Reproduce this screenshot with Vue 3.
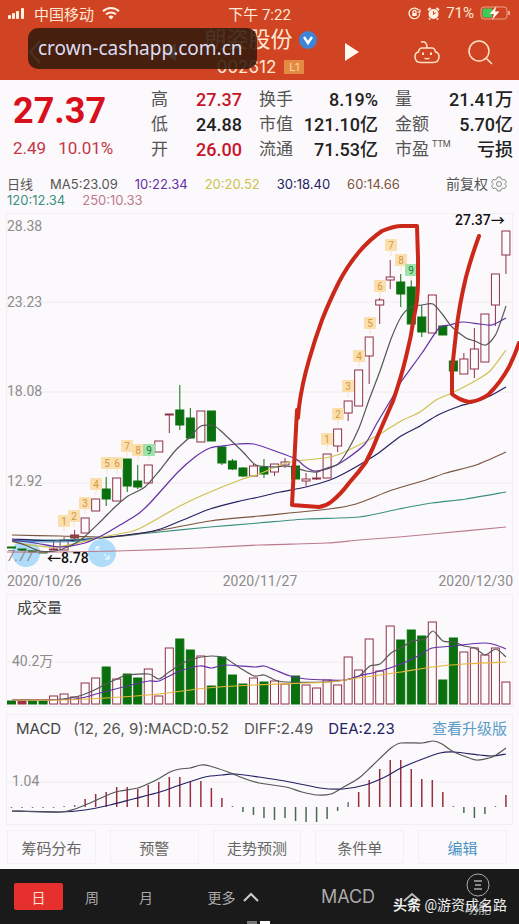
<script setup>
import { ref } from 'vue';

const period = ref('日');
const periods = ['日', '周', '月'];

const quotes = [
  { label: '高', value: '27.37', up: true },
  { label: '换手', value: '8.19%' },
  { label: '量', value: '21.41万' },
  { label: '低', value: '24.88' },
  { label: '市值', value: '121.10亿' },
  { label: '金额', value: '5.70亿' },
  { label: '开', value: '26.00', up: true },
  { label: '流通', value: '71.53亿' },
  { label: '市盈', sup: 'TTM', value: '亏损' },
];

const averages = [
  { text: 'MA5:23.09', tone: 'gray' },
  { text: '10:22.34', tone: 'purple' },
  { text: '20:20.52', tone: 'yellow' },
  { text: '30:18.40', tone: 'navy' },
  { text: '60:14.66', tone: 'brown' },
];
const longAverages = [
  { text: '120:12.34', tone: 'teal' },
  { text: '250:10.33', tone: 'pink' },
];

const barX = (i) => 11.5 + i * 10.52;

// kind, body top, body bottom, high, low
const candles = [
  ['g', 547, 548, 547, 548], ['g', 549, 550, 549, 550], ['g', 551, 552, 551, 552], ['g', 552, 553, 552, 553],
  ['h', 549, 550, 541, 550], ['h', 540, 550, 537, 550], ['r', 535, 538, 530, 540], ['h', 518, 533, 518, 533],
  ['h', 499, 511, 499, 511], ['g', 489, 499, 477, 506], ['h', 478, 501, 478, 501], ['g', 459, 486, 459, 492],
  ['g', 481, 487, 465, 489], ['h', 465, 483, 465, 483], ['h', 441, 452, 441, 452], ['h', 414, 415, 414, 433],
  ['g', 410, 425, 385, 430], ['g', 418, 438, 408, 439], ['h', 411, 442, 411, 442], ['g', 411, 441, 411, 441],
  ['g', 447, 463, 446, 465], ['g', 461, 469, 459, 470], ['g', 468, 476, 467, 477], ['h', 466, 476, 464, 476],
  ['g', 467, 474, 459, 478], ['h', 464, 472, 464, 476], ['h', 462, 465, 458, 468], ['g', 466, 479, 466, 479],
  ['h', 479, 481, 473, 486], ['h', 478, 479, 472, 480], ['h', 454, 478, 454, 478], ['h', 429, 446, 429, 452],
  ['h', 401, 413, 401, 421], ['h', 370, 406, 370, 406], ['h', 337, 356, 337, 384], ['h', 300, 305, 298, 324],
  ['h', 277, 280, 260, 289], ['g', 282, 294, 274, 307], ['g', 287, 324, 280, 335], ['g', 317, 332, 305, 337],
  ['h', 295, 333, 295, 333], ['g', 326, 335, 326, 335], ['g', 361, 371, 361, 371], ['h', 359, 374, 353, 374],
  ['h', 349, 369, 328, 378], ['h', 314, 362, 314, 362], ['h', 274, 305, 274, 326], ['h', 231, 255, 231, 274],
];

// x, y, number of the nine-turn marker
const marks = [
  [64, 521, 1], [74, 516, 2], [85, 503, 3], [96, 484, 4], [107, 463, 5], [117, 463, 6], [127, 446, 7], [138, 450, 8], [149, 450, 9],
  [327, 439, 1], [338, 414, 2], [348, 386, 3], [359, 356, 4], [370, 323, 5], [380, 286, 6], [391, 245, 7], [401, 260, 8], [411, 270, 9],
];

function curve(text) {
  const p = text.split(' ').map((s) => s.split(',').map(Number));
  let d = `M${p[0]}`;
  for (let i = 0; i < p.length - 1; i++) {
    const a = p[i - 1] || p[i];
    const b = p[i];
    const c = p[i + 1];
    const e = p[i + 2] || c;
    d += `C${b[0] + (c[0] - a[0]) / 8},${b[1] + (c[1] - a[1]) / 8} ${c[0] - (e[0] - b[0]) / 8},${c[1] - (e[1] - b[1]) / 8} ${c}`;
  }
  return d;
}

const priceLines = [
  { tone: 'pink', d: curve('7,552 60,552 117,551 200,548 259,545 326,543 359,540 399,537 432,534 506,527') },
  { tone: 'teal', d: curve('12,540 60,540 100,538 150,533 210,527 259,523 306,519 359,517 399,509 432,503 466,499 506,492') },
  { tone: 'brown', d: curve('12,535 60,536 110,537 150,532 210,521 259,516 329,509 356,504 392,490 426,480 446,473 476,465 506,452') },
  { tone: 'navy', d: curve('12,539 60,541 100,538 153,531 178,522 210,509 240,501 259,497 280,492 306,487 330,480 345,473 366,461 380,452 401,436 420,426 438,415 460,406 475,402 490,396 506,387') },
  { tone: 'blue', d: curve('12,541 45,542 80,541 103,537') },
  { tone: 'yellow', d: curve('12,542 55,547 103,537 133,531 150,523 178,507 203,495 240,480 256,475 264,472 280,465 296,461 325,458 340,454 359,445 380,434 401,421 420,412 436,400 452,393 475,381 490,371 506,350') },
  { tone: 'purple', d: curve('12,540 35,543 60,547 85,543 103,535 120,525 138,514 150,503 178,472 195,457 210,448 222,446 238,444 254,444 275,451 296,459 303,465 314,471 330,468 345,460 365,444 377,423 392,398 401,382 422,353 439,328 450,325 462,322 480,324 492,325 506,318') },
  { tone: 'gray', d: curve('12,541 25,545 40,551 55,551 70,546 83,538 100,522 115,507 128,496 145,487 160,470 175,451 190,437 201,426 214,426 222,432 243,452 256,465 275,467 285,466 296,468 306,471 317,472 327,468 338,464 348,450 359,428 369,400 380,371 391,339 401,317 411,307 422,305 433,304 443,315 452,327 466,338 475,341 486,345 496,334 506,306') },
];

const volumes = [
  ['g', 700], ['r', 700], ['g', 700], ['g', 700], ['h', 695], ['h', 693], ['h', 696], ['h', 682], ['h', 677], ['g', 666], ['h', 678], ['g', 673],
  ['g', 677], ['h', 668], ['h', 695], ['h', 647], ['g', 638], ['g', 649], ['h', 655], ['g', 685], ['g', 656], ['g', 674], ['g', 683], ['h', 677],
  ['g', 681], ['h', 680], ['h', 683], ['g', 675], ['h', 684], ['h', 687], ['h', 679], ['h', 684], ['h', 656], ['h', 669], ['h', 638], ['h', 670],
  ['h', 625], ['g', 639], ['g', 629], ['g', 635], ['h', 621], ['g', 679], ['g', 637], ['h', 651], ['h', 647], ['h', 654], ['h', 647], ['h', 681],
];
const volumeLines = [
  { tone: 'gray', d: curve('12,699 50,699 75,696 90,691 106,683 117,678 127,674 149,673 159,678 169,671 185,661 197,657 212,655 225,657 240,667 254,675 264,674 275,679 285,681 327,681 345,679 359,675 370,665 380,663 391,652 401,647 412,640 425,638 433,630 443,640 454,641 464,645 475,647 485,654 496,648 506,656') },
  { tone: 'purple', d: curve('12,699 75,698 96,693 127,685 149,680 159,680 180,670 200,665 212,667 225,664 254,666 264,665 275,669 290,675 306,678 327,679 345,679 359,675 380,670 401,663 420,654 432,647 454,645 470,643 485,642 496,644 506,648') },
  { tone: 'amber', d: curve('12,699 60,699 106,697 159,693 206,687 254,684 330,681 350,678 380,674 401,671 432,666 464,663 506,661') },
];

// bar ends, measured from the zero axis at 806
const macd = [
  807, 807, 807, 807, 807, 805, 804, 798, 793, 791, 786, 786, 788, 784, 781, 776, 776, 780, 780, 787, 797, 805, 811, 814,
  817, 819, 817, 820, 821, 821, 818, 810, 801, 791, 779, 768, 759, 759, 768, 778, 779, 791, 805, 812, 817, 813, 805, 794,
];
const macdLines = [
  { tone: 'navy', d: curve('12,810 60,811 85,809 110,804 133,798 160,791 180,784 205,776 222,774 235,773 259,776 285,780 320,787 343,788 365,784 385,776 401,767 420,759 440,752 454,751 480,754 492,755 506,753') },
  { tone: 'gray', d: curve('12,810 60,811 75,808 90,802 110,793 120,790 138,787 150,782 160,777 170,771 180,768 190,767 201,764 210,765 228,771 243,777 259,782 286,786 302,791 317,794 331,793 342,787 359,777 372,765 391,747 401,742 422,742 433,740 442,743 454,751 476,759 489,757 496,754 506,747') },
];
</script>

<template>
  <main>
    <header>
      <div class="status">
        <div class="carrier">
          <svg width="18" height="12" viewBox="0 0 18 12" fill="#fff0df">
            <rect x="0" y="8" width="3" height="4" rx="1" /><rect x="4" y="6" width="3" height="6" rx="1" />
            <rect x="8" y="4" width="3" height="8" rx="1" /><rect x="13" y="1" width="3" height="11" rx="1" />
          </svg>
          <span>中国移动</span>
          <svg width="18" height="14" viewBox="0 0 18 14" fill="none" stroke="#fff0df" stroke-width="2">
            <path d="M1 5.2a11.5 11.5 0 0 1 16 0M4 8.4a7.2 7.2 0 0 1 10 0" />
            <path d="M6.3 10.8a4 4 0 0 1 5.4 0L9 13.6z" fill="#fff0df" stroke="none" />
          </svg>
        </div>
        <time>下午 7:22</time>
        <div class="device">
          <svg width="13" height="13" viewBox="0 0 13 13" fill="none" stroke="#fff0df" stroke-width="1.3">
            <path d="M10.5 3a5.3 5.3 0 1 0 1.2 3.5M11.9 2.6v2.6H9.5M5 6V4.8a1.5 1.5 0 0 1 3 0V6" />
            <rect x="4.3" y="6" width="4.4" height="3" fill="#fff0df" stroke="none" />
          </svg>
          <svg width="13" height="13" viewBox="0 0 13 13">
            <circle cx="6.5" cy="7" r="5" fill="#fff0df" />
            <path d="M1 3.2 3.6 1M12 3.2 9.4 1M3 11.5l-1 1M10 11.5l1 1" stroke="#fff0df" stroke-width="2" />
            <path d="M6.5 4v3.3L9 5.6" fill="none" stroke="#d04424" />
          </svg>
          <span>71%</span>
          <svg width="31" height="14" viewBox="0 0 31 14">
            <rect x="1" y="1" width="26" height="12" rx="3" fill="none" stroke="#eda386" />
            <path d="M2.5 4a1.5 1.5 0 0 1 1.5-1.5h8v9H4A1.5 1.5 0 0 1 2.5 10z" fill="#3fcb58" />
            <path d="M16.5 0 9.5 8h4.5L12 14l7.5-8.500H15z" fill="#fff8ee" />
            <path d="M29 5v4" stroke="#eda386" stroke-width="2" />
          </svg>
        </div>
      </div>
      <nav>
        <div class="nav-left">
          <button aria-label="返回">
            <svg width="14" height="24" viewBox="0 0 14 24" fill="none" stroke="#ffe2c4" stroke-width="2"><path d="M12 1 2 12l10 11" /></svg>
          </button>
          <button aria-label="上一只">
            <svg width="14" height="18" viewBox="0 0 14 18" fill="#d8f0ff"><path d="M14 0v18L0 9z" /></svg>
          </button>
        </div>
        <div class="stock">
          <h1>朗姿股份
            <svg width="18" height="18" viewBox="0 0 18 18"><circle cx="9" cy="9" r="9" fill="#3d85d8" /><path d="m5 6 4 6 4-6" fill="none" stroke="#fff" stroke-width="2.4" /></svg>
          </h1>
          <p>002612 <span class="level">L1</span></p>
        </div>
        <div class="nav-right">
          <button class="next" aria-label="下一只">
            <svg width="14" height="18" viewBox="0 0 14 18" fill="#fff8ee"><path d="M0 0v18l14-9z" /></svg>
          </button>
          <button aria-label="助手">
            <svg width="26" height="24" viewBox="0 0 26 24" fill="none" stroke="#ffe2c4" stroke-width="1.5">
              <path d="M7 2c4-1 6 1 6 6M8 8h10c2 0 3 1 3.5 4 3 .5 3.5 2 3.5 4.5 0 4-2.500 6-6 6H7c-3.500 0-6-2-6-6C1 14 1.500 12.500 4.500 12 5 9 6 8 8 8z" />
              <path d="M9 12.500v2.500M17 12.500v2.500" stroke-width="2" /><path d="M10.500 18c1.500 1 3.500 1 5 0" />
            </svg>
          </button>
          <button aria-label="搜索">
            <svg width="25" height="25" viewBox="0 0 25 25" fill="none" stroke="#ffe2c4" stroke-width="1.5"><circle cx="11" cy="11" r="10" /><path d="m18 18 6 6" /></svg>
          </button>
        </div>
      </nav>
      <div class="site">crown-cashapp.com.cn</div>
    </header>

    <section class="quote">
      <div class="price">
        <strong>27.37</strong>
        <p><span>2.49</span><span>10.01%</span></p>
      </div>
      <dl>
        <div v-for="q in quotes" :key="q.label">
          <dt>{{ q.label }}<sup v-if="q.sup">{{ q.sup }}</sup></dt>
          <dd :class="{ up: q.up }">{{ q.value }}</dd>
        </div>
      </dl>
    </section>

    <section class="averages">
      <div class="row">
        <span class="day">日线</span>
        <span v-for="a in averages" :key="a.text" :class="a.tone">{{ a.text }}</span>
        <button class="adjust">前复权
          <svg width="16" height="16" viewBox="0 0 16 16" fill="none" stroke="#888">
            <path d="M6.500 1h3l.7 2 1.600.9 2.100-.4 1.500 2.600L14 7.600v.8l1.400 1.500-1.500 2.600-2.100-.4-1.600.9-.7 2h-3l-.7-2-1.600-.9-2.100.4L.6 9.900 2 8.400v-.8L.6 6.100l1.500-2.600 2.100.4L5.800 3z" />
            <circle cx="8" cy="8" r="2.5" />
          </svg>
        </button>
      </div>
      <div class="row">
        <span v-for="a in longAverages" :key="a.text" :class="a.tone">{{ a.text }}</span>
      </div>
    </section>

    <section class="panel price-panel">
      <svg class="chart" viewBox="7 214 505 357">
        <path class="grid" d="M7 302h505M7 392h505M7 483h505" />
        <g class="axis">
          <text x="7" y="231">28.38</text>
          <text x="7" y="307">23.23</text>
          <text x="7" y="396">18.08</text>
          <text x="7" y="486">12.92</text>
        </g>
        <circle class="bubble" cx="26" cy="553" r="14" />
        <circle class="bubble" cx="102" cy="553" r="14" />
        <path class="expand" d="M96 551v-4h4M96 547l5 5M109 555v4h-4M109 559l-5-5" />
        <text class="axis slanted" x="7" y="561">7.77</text>
        <g v-for="(c, i) in candles" :key="i" :class="'bar-' + c[0]">
          <path :d="`M${barX(i)} ${c[3]}V${c[1]}M${barX(i)} ${c[2]}V${c[4]}`" />
          <rect :x="barX(i) - 4" :y="c[1]" width="8" :height="c[2] - c[1]" />
        </g>
        <path v-for="l in priceLines" :key="l.tone" class="line" :class="l.tone" :d="l.d" />
        <g v-for="m in marks" :key="m[0]" class="mark" :class="{ nine: m[2] === 9 }">
          <path :d="`M${m[0]} ${m[1] + 6}v5`" />
          <rect :x="m[0] - 6" :y="m[1] - 6" width="12" height="12" rx="1" />
          <text :x="m[0]" :y="m[1] + 4">{{ m[2] }}</text>
        </g>
        <path class="pen" d="M417 226H402C395 226 389 228 382 231Q369 240 359 252Q348 265 339 282Q329 302 322 320Q315 339 309 360Q302 384 299 407L298 418L297 410L294 467L292 505Q305 506 319 507Q326 506 331 502Q341 494 349 483Q359 472 366 462Q373 449 379 433L393 401Q401 378 406 357Q411 338 414 317Q418 299 418 283V258z" />
        <path class="pen" d="M479 236Q471 258 466 277Q459 306 456 333L452 370V394Q459 400 469 402Q480 401 489 394Q501 382 509 367Q515 355 519 343" />
        <text class="callout" x="455" y="225">27.37→</text>
        <text class="callout" x="47" y="563">←8.78</text>
      </svg>
    </section>
    <div class="dates"><span>2020/10/26</span><span>2020/11/27</span><span>2020/12/30</span></div>

    <section class="panel volume">
      <h2>成交量</h2>
      <svg class="chart" viewBox="7 618 505 87">
        <path class="grid" d="M7 661h505" />
        <text class="axis" x="12" y="665">40.2万</text>
        <g v-for="(v, i) in volumes" :key="i" :class="'bar-' + v[0]">
          <rect :x="barX(i) - 4" :y="v[1]" width="8" :height="703 - v[1]" />
        </g>
        <path v-for="l in volumeLines" :key="l.tone" class="line" :class="l.tone" :d="l.d" />
      </svg>
    </section>

    <section class="panel macd">
      <div class="macd-head">
        <h2>MACD</h2>
        <span>(12, 26, 9):MACD:0.52</span>
        <span>DIFF:2.49</span>
        <span class="dea">DEA:2.23</span>
        <a href="#">查看升级版</a>
      </div>
      <svg class="chart" viewBox="7 739 505 84">
        <path class="grid" d="M7 781h505" />
        <text class="axis" x="12" y="785">1.04</text>
        <path v-for="(y, i) in macd" :key="i" class="stick" :class="{ rise: y < 800, fall: y > 808 }" :d="`M${barX(i)} 806V${y}`" />
        <path v-for="l in macdLines" :key="l.tone" class="line" :class="l.tone" :d="l.d" />
      </svg>
    </section>

    <section class="actions">
      <button>筹码分布</button>
      <button>预警</button>
      <button>走势预测</button>
      <button>条件单</button>
      <button class="edit">编辑</button>
    </section>

    <footer>
      <button v-for="p in periods" :key="p" :class="{ active: p === period }" @click="period = p">{{ p }}</button>
      <button class="more">更多
        <svg width="16" height="10" viewBox="0 0 16 10" fill="none" stroke="#ccc" stroke-width="2"><path d="m1 9 7-7 7 7" /></svg>
      </button>
      <button class="indicator">MACD</button>
      <button aria-label="展开">
        <svg width="18" height="10" viewBox="0 0 18 10" fill="none" stroke="#bbb" stroke-width="2"><path d="m1 9 8-7 8 7" /></svg>
      </button>
      <button class="tools">
        <svg width="24" height="24" viewBox="0 0 24 24" fill="none" stroke="#aaa"><circle cx="12" cy="12" r="11" /><path d="M8 8h8M9 12h6M8 16h8" stroke-width="1.5" /></svg>
        <span>功能</span>
      </button>
      <p class="watermark"><b>头条</b> @游资成名路</p>
      <div class="pages"><i></i><i></i></div>
    </footer>
  </main>
</template>

<style>
body {
  background-color: #fbf9fb;
}
</style>

<style scoped>
main {
  font-family: Roboto, "Noto Sans CJK SC", sans-serif;
  color: #555;
  background-color: #fbf9fb;
  overflow: hidden;
}
h1, h2, p, dl, dd {
  margin: 0;
  font-weight: 400;
}
button {
  font: inherit;
  color: inherit;
  padding: 0;
  border: none;
  background: none;
  cursor: pointer;
}
svg {
  display: block;
  flex-shrink: 0;
}
header {
  position: relative;
  height: 80px;
  background-color: #d04424;
  color: #ffe9d4;
}
.status {
  display: grid;
  grid-template-columns: 1fr auto 1fr;
  align-items: center;
  height: 26px;
  padding: 0 8px;
  font-size: 15px;
}
.carrier, .device {
  display: flex;
  align-items: center;
  gap: 8px;
}
.device {
  justify-content: flex-end;
  gap: 6px;
}
nav {
  display: grid;
  grid-template-columns: 1fr auto 1fr;
  column-gap: 28px;
  padding: 0 26px 0 28px;
}
.nav-left, .nav-right {
  display: flex;
  align-items: center;
  height: 52px;
}
.nav-left {
  justify-content: space-between;
}
.nav-right {
  gap: 28px;
}
.next {
  margin-right: auto;
}
.stock {
  display: flex;
  flex-direction: column;
  align-items: center;
}
h1 {
  display: flex;
  align-items: center;
  gap: 6px;
  font-size: 22px;
  line-height: 28px;
}
.stock p {
  display: flex;
  align-items: center;
  gap: 8px;
  font-family: Inter, sans-serif;
  font-size: 17px;
  line-height: 26px;
}
.level {
  width: 20px;
  font-size: 11px;
  line-height: 14px;
  text-align: center;
  color: #ffd79a;
  background-color: #e58a44;
}
.site {
  position: absolute;
  left: 28px;
  top: 28px;
  padding: 0 14px 0 10px;
  border-radius: 10px;
  font-family: "Noto Sans", sans-serif;
  font-size: 19px;
  line-height: 41px;
  color: #dcdcf2;
  background-color: rgba(50, 26, 12, 0.88);
}
.quote {
  display: flex;
  padding: 7px 6px 0 13px;
  height: 90px;
  box-sizing: border-box;
}
.price {
  width: 138px;
  color: #c4384a;
  font-size: 17px;
}
.price strong {
  display: block;
  font-size: 36px;
  line-height: 48px;
  color: #d8101c;
}
.price p {
  display: flex;
  gap: 12px;
  line-height: 26px;
}
dl {
  flex: 1;
  display: grid;
  grid-template-columns: 91fr 119fr 118fr;
  column-gap: 17px;
  grid-auto-rows: 25px;
}
dl div {
  display: flex;
  justify-content: space-between;
  line-height: 25px;
  white-space: nowrap;
}
dt {
  font-size: 17px;
}
sup {
  margin-left: 3px;
  font-size: 9px;
  line-height: 10px;
  vertical-align: 8px;
}
dd {
  font-size: 18px;
  font-weight: 500;
  color: #222;
}
.up {
  color: #c8152a;
}
.averages {
  padding: 6px 12px 0 7px;
  font-family: Inter, "Noto Sans CJK SC", sans-serif;
  font-size: 13px;
  line-height: 16px;
}
.row {
  display: flex;
  gap: 17px;
  height: 16px;
  white-space: nowrap;
}
.adjust {
  display: flex;
  align-items: center;
  gap: 3px;
  margin-left: auto;
  font-size: 14px;
}
.panel {
  margin: 0 6px;
  border: 1px solid #f0eff4;
}
.price-panel {
  margin-top: 5px;
}
.chart {
  width: 100%;
  height: auto;
  overflow: visible;
}
.grid {
  stroke: #eeecf1;
}
.axis {
  font-size: 14px;
  fill: #8c8c8c;
}
.slanted {
  font-style: italic;
}
.bubble {
  fill: #afdcf8;
}
.expand {
  fill: none;
  stroke: #fff;
  stroke-width: 1;
}
.line {
  fill: none;
  stroke: currentColor;
  stroke-width: 1.2;
}
.gray { color: #555; }
.purple { color: #6430a8; }
.yellow { color: #cdc24e; }
.amber { color: #e6b63c; }
.navy { color: #242264; }
.blue { color: #4a9ac8; }
.brown { color: #7a5540; }
.teal { color: #3c9080; }
.pink { color: #bd7b8d; }
.bar-g {
  fill: #0a700e;
  stroke: #0a700e;
}
.bar-h {
  fill: #fdfafc;
  stroke: #8e3348;
}
.bar-r {
  fill: #b03040;
  stroke: #8e3348;
}
.mark {
  fill: #fbdfae;
  stroke: none;
}
.mark path {
  stroke: #f6e3c6;
}
.mark text {
  font-size: 10px;
  text-anchor: middle;
  fill: #d09a3c;
}
.nine {
  fill: #9fe3ac;
}
.nine text {
  fill: #1c7a30;
}
.pen {
  fill: none;
  stroke: #cb281a;
  stroke-width: 4;
  stroke-linejoin: round;
  stroke-linecap: round;
}
.callout {
  font-size: 14px;
  font-weight: 500;
  fill: #111;
}
.dates {
  display: flex;
  justify-content: space-between;
  padding: 0 6px 4px 7px;
  font-size: 14px;
  line-height: 18px;
  color: #8c8c8c;
}
.volume h2 {
  padding: 2px 0 0 10px;
  font-size: 15px;
  line-height: 22px;
  color: #444;
}
.macd {
  margin-top: 7px;
}
.macd-head {
  display: flex;
  align-items: center;
  height: 22px;
  padding: 3px 5px 0 9px;
  font-family: Inter, "Noto Sans CJK SC", sans-serif;
  font-size: 15px;
  line-height: 20px;
  white-space: nowrap;
}
.macd-head h2 {
  margin-right: 12px;
  font-size: 15px;
  color: #444;
}
.macd-head span {
  margin-right: 15px;
}
.macd-head .dea {
  margin-right: auto;
  color: #242264;
}
.macd-head a {
  font-size: 15px;
  color: #5a9cc8;
  text-decoration: none;
}
.stick {
  stroke: #777;
  stroke-width: 1.5;
}
.rise {
  stroke: #963040;
}
.fall {
  stroke: #4a6a50;
}
.actions {
  display: grid;
  grid-template-columns: repeat(5, 1fr);
  gap: 14px;
  padding: 5px 12px 5px 7px;
}
.actions button {
  height: 34px;
  border: 1px solid #f3f1f6;
  font-size: 15px;
  color: #666;
  white-space: nowrap;
}
.actions .edit {
  color: #4a90c4;
}
footer {
  position: relative;
  display: grid;
  grid-template-columns: 49fr 58fr 50fr 124fr 106fr 22fr 96fr;
  align-items: center;
  height: 55px;
  padding-left: 14px;
  background-color: #1a1a1a;
  color: #aaa;
  font-size: 14px;
}
footer button {
  height: 27px;
}
footer svg {
  margin: 0 auto;
}
footer .active {
  border-radius: 2px;
  background-color: #e5302e;
  color: #ffe0d0;
}
.more {
  display: flex;
  align-items: center;
  justify-content: center;
  gap: 7px;
}
.more svg {
  margin: 0;
}
.indicator {
  font-family: Inter, sans-serif;
  font-size: 18px;
}
footer .tools {
  height: 47px;
  padding-left: 14px;
  font-size: 13px;
  line-height: 24px;
}
.watermark {
  position: absolute;
  right: 12px;
  bottom: 9px;
  font-size: 14px;
  line-height: 20px;
  color: #eee;
}
.pages {
  position: absolute;
  left: 247px;
  bottom: 0;
  display: flex;
  gap: 3px;
}
.pages i {
  width: 10px;
  height: 3px;
  background-color: #777;
}
.pages i:last-child {
  background-color: #fff;
}
</style>
